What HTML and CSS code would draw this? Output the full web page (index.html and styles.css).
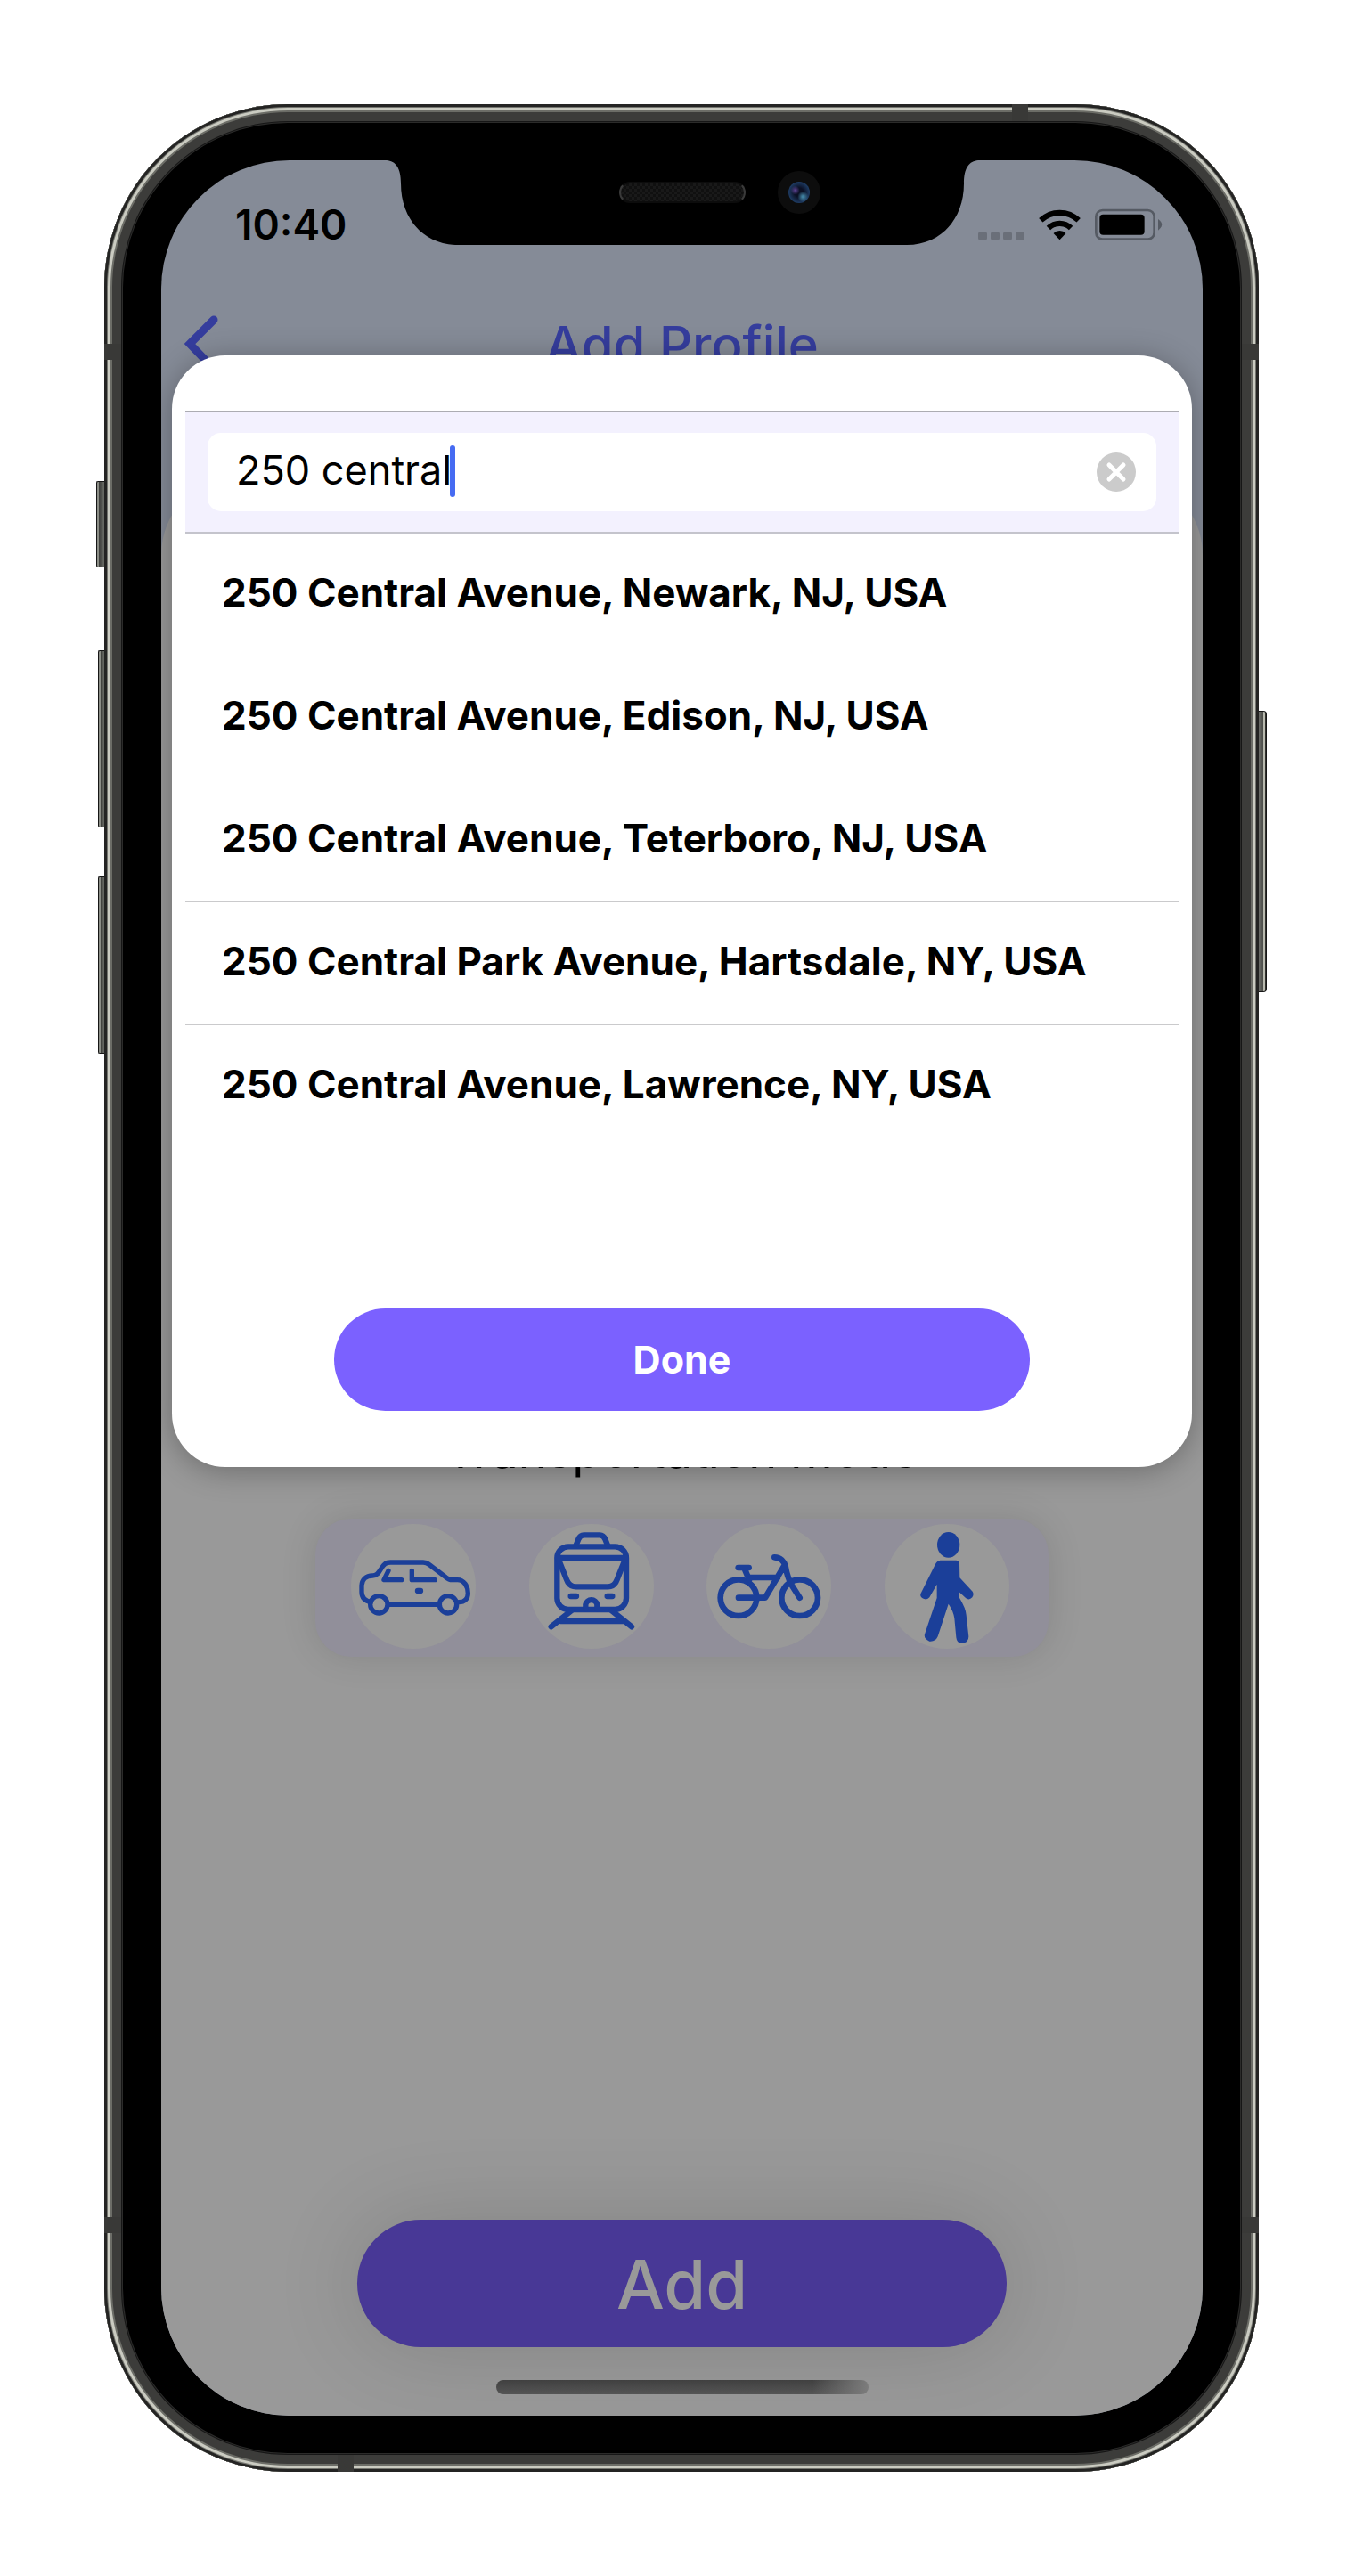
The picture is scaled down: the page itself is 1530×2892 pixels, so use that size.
FILE: index.html
```html
<!DOCTYPE html>
<html lang="en">
<head>
<meta charset="utf-8">
<meta name="viewport" content="width=device-width, initial-scale=1">
<title>Add Profile</title>
<link rel="stylesheet" href="styles.css">
</head>
<body>
<div class="device">
  <span class="key key-mute"></span>
  <span class="key key-up"></span>
  <span class="key key-down"></span>
  <span class="key key-power"></span>
  <span class="band band-v band-top"></span>
  <span class="band band-v band-bottom"></span>
  <span class="band band-h band-left band-high"></span>
  <span class="band band-h band-right band-high"></span>
  <span class="band band-h band-left band-low"></span>
  <span class="band band-h band-right band-low"></span>

  <div class="screen">
    <div class="notch">
      <svg class="notch-shape" viewBox="0 0 664 95" aria-hidden="true">
        <path d="M0 0C10 1 16 8 16 26C16 66 42 95 80 95H584C622 95 648 66 648 26C648 8 654 1 664 0Z"/>
      </svg>
      <span class="speaker"></span>
      <span class="camera"><span class="lens"></span></span>
    </div>

    <header class="status">
      <time class="clock">10:40</time>
      <div class="indicators">
        <span class="cell"><i></i><i></i><i></i><i></i></span>
        <svg class="wifi" viewBox="556 433 148 108" aria-hidden="true">
          <path class="arc" d="M566 473A92 92 0 0 1 694 473M592 499A54 54 0 0 1 668 499"/>
          <path d="M630 539L609 517A30 30 0 0 1 651 517Z"/>
        </svg>
        <svg class="battery" viewBox="750 433 228 108" aria-hidden="true">
          <rect class="shell" x="754" y="439" width="196" height="98" rx="22"/>
          <rect x="766" y="453" width="151" height="69" rx="12"/>
          <path class="nub" d="M963 469Q988 487 963 507Z"/>
        </svg>
      </div>
    </header>

    <nav class="navbar">
      <a class="back" href="#" aria-label="Back">
        <svg viewBox="0 0 39 66" aria-hidden="true"><path d="M33 5L6 32L33 60"/></svg>
      </a>
      <h1 class="title">Add Profile</h1>
    </nav>

    <main class="sheet">
      <h2 class="subtitle">Transportation mode</h2>
      <div class="modes">
        <button class="mode" type="button" aria-label="Car">
          <svg viewBox="165 363 420 420" aria-hidden="true">
            <path class="s16" d="M232 626C212 622 201 610 201 592V572C201 550 215 537 238 537C262 537 262 510 280 497C286 492 292 492 298 492H408C416 492 422 494 428 499L484 542C492 549 498 551 506 551H524C545 551 559 572 559 596C559 614 548 626 528 626M291 634H460M291 520L276 551H335M370 520V551H448"/>
            <circle class="s16" cx="259" cy="634" r="29"/>
            <circle class="s16" cx="492" cy="634" r="29"/>
            <path class="s19" d="M390 588H399"/>
          </svg>
        </button>
        <button class="mode" type="button" aria-label="Train">
          <svg viewBox="764 363 420 420" aria-hidden="true">
            <rect class="s19" x="858" y="439" width="233" height="212" rx="38"/>
            <path class="s19" d="M860 477H1090M864 485L890 550C896 566 906 574 922 574H1030C1046 574 1054 566 1060 550L1086 485M922 434L930 414C934 404 938 400 948 400H1002C1012 400 1016 404 1020 414L1028 434M904 606H923M1027 606H1044M954 648V634A20 20 0 0 1 993 634V648M906 655L838 709M1042 655L1109 709M870 690H1080"/>
          </svg>
        </button>
        <button class="mode" type="button" aria-label="Bicycle">
          <svg viewBox="102 363 420 420" aria-hidden="true">
            <circle class="s20" cx="210" cy="611" r="61"/>
            <circle class="s20" cx="416" cy="611" r="61"/>
            <path class="s20" d="M210 611H300L366 500M250 543H342M246 551L232 518M209 510H245M331 475C352 475 364 490 368 505C372 530 378 550 390 570L416 611"/>
          </svg>
        </button>
        <button class="mode" type="button" aria-label="Walk">
          <svg viewBox="701 363 420 420" aria-hidden="true">
            <ellipse class="solid" cx="916" cy="433" rx="38" ry="43"/>
            <path class="solid" d="M888 485H942Q953 486 953 498L954 544L997 590Q1003 600 996 610Q986 621 975 613L952 592V610Q975 648 976 670L984 742Q984 764 960 765Q944 764 942 745L936 680Q932 655 916 632L880 742Q872 760 852 758Q832 750 836 734L877 612V566L852 610Q844 620 832 614Q818 608 823 596L872 498Q878 486 888 485Z"/>
          </svg>
        </button>
      </div>
      <button class="add" type="button">Add</button>
      <span class="home"></span>
    </main>

    <section class="modal" role="dialog" aria-label="Address search">
      <div class="search">
        <div class="field">
          <label class="entry">
            <input class="query" type="text" value="250 central" aria-label="Address">
            <span class="caret"></span>
          </label>
          <button class="clear" type="button" aria-label="Clear">
            <svg viewBox="0 0 44 44" aria-hidden="true"><circle cx="22" cy="22" r="22"/><path d="M14 14L30 30M30 14L14 30"/></svg>
          </button>
        </div>
      </div>
      <ul class="results">
        <li>250 Central Avenue, Newark, NJ, USA</li>
        <li>250 Central Avenue, Edison, NJ, USA</li>
        <li>250 Central Avenue, Teterboro, NJ, USA</li>
        <li>250 Central Park Avenue, Hartsdale, NY, USA</li>
        <li>250 Central Avenue, Lawrence, NY, USA</li>
      </ul>
      <button class="done" type="button">Done</button>
    </section>
  </div>
</div>
</body>
</html>
```
FILE: styles.css
```css
* { box-sizing: border-box; }

body {
  margin: 0;
  padding: 117px;
  background: #fff;
  color: #000;
  font-family: Inter, "Liberation Sans", sans-serif;
}

button {
  border: 0;
  padding: 0;
  font-family: inherit;
  cursor: pointer;
}

/* Phone body */
.device {
  position: relative;
  display: flex;
  min-height: calc(100vh - 234px);
  padding: 63px 63px 63px 64px;
  border-radius: 206px;
  background: #000;
  box-shadow:
    inset 0 0 0 3px #242423,
    inset 0 0 0 4px #74756f,
    inset 0 0 0 7px #cacbc1,
    inset 0 0 0 9px #6c6d67,
    inset 0 0 0 19px #3c3c3a,
    inset 0 0 0 20px #161616,
    inset 0 0 0 21px #2b2b2a;
}

.key {
  position: absolute;
  left: -7px;
  width: 7px;
  border: 1px solid #161616;
  border-right: 0;
  border-radius: 2px 0 0 2px;
  background: linear-gradient(90deg, #8b8d86 2px, #3c3d3a 2px, #6a6c66);
}
.key-mute { top: 423px; left: -9px; width: 9px; height: 97px; }
.key-up { top: 613px; height: 199px; }
.key-down { top: 867px; height: 199px; }
.key-power {
  top: 681px;
  left: auto;
  right: -9px;
  width: 9px;
  height: 316px;
  border: 1px solid #161616;
  border-left: 0;
  border-radius: 0 4px 4px 0;
  background: linear-gradient(270deg, #33332f 1px, #b9baaf 1px, #b9baaf 3px, #4c4d49 3px, #6a6b67);
}

.band { position: absolute; background: #393937; }
.band-v { width: 18px; height: 19px; }
.band-h { width: 19px; height: 18px; }
.band-top { top: 0; right: 259px; }
.band-bottom { bottom: 0; left: 262px; }
.band-left { left: 0; }
.band-right { right: 0; }
.band-high { top: 269px; }
.band-low { bottom: 268px; }

/* Screen */
.screen {
  position: relative;
  display: flex;
  flex-direction: column;
  flex: 1;
  min-width: 0;
  overflow: hidden;
  border-radius: 144px;
  background: #858b97;
}

.notch {
  position: absolute;
  z-index: 2;
  top: 0;
  left: 50%;
  width: 664px;
  height: 95px;
  transform: translateX(-50%);
}
.notch-shape { display: block; width: 100%; height: 100%; }
.speaker {
  position: absolute;
  top: 24px;
  left: 261px;
  width: 142px;
  height: 24px;
  border: 2px solid #0c0c0c;
  border-color: #0c0c0c #3a3a3a;
  border-radius: 12px;
  background: repeating-conic-gradient(#191919 0 25%, #101010 0 50%) 0 0 / 6px 6px;
}
.camera {
  position: absolute;
  top: 12px;
  left: 439px;
  display: grid;
  place-items: center;
  width: 48px;
  height: 48px;
  border-radius: 50%;
  background: #0d0d0d;
}
.lens {
  width: 24px;
  height: 24px;
  border-radius: 50%;
  background:
    radial-gradient(circle at 32% 40%, #5c4290, transparent 5px),
    radial-gradient(circle at 68% 70%, #40809f 1px, transparent 6px),
    radial-gradient(circle, #0b1024 30%, #2d5c92);
}

.status {
  display: flex;
  justify-content: space-between;
  align-items: center;
  padding: 44px 45px 0 83px;
}
.clock {
  font-size: 46px;
  line-height: 56px;
  font-weight: 600;
}
.indicators { display: flex; align-items: center; gap: 15px; }
.cell { display: flex; gap: 4px; align-self: flex-end; }
.cell i {
  width: 10px;
  height: 10px;
  border-radius: 3px;
  background: #6a6f79;
}
.wifi { width: 49px; height: 36px; }
.wifi .arc { fill: none; stroke: #000; stroke-width: 19; }
.battery { width: 76px; height: 36px; }
.battery .shell { fill: none; stroke: #555a63; stroke-width: 8; }
.battery .nub { fill: #555a63; }

.navbar {
  position: relative;
  display: flex;
  justify-content: center;
  align-items: center;
  height: 114px;
  margin-top: 50px;
}
.back { position: absolute; top: 24px; left: 26px; }
.back svg { display: block; width: 39px; height: 66px; }
.back path { fill: none; stroke: #353d9d; stroke-width: 9; stroke-linecap: round; }
.title {
  margin: 0;
  font-size: 58px;
  line-height: 70px;
  font-weight: 500;
  color: #353d9d;
}

.sheet {
  display: flex;
  flex-direction: column;
  flex: 1;
  align-items: center;
  margin-top: 89px;
  padding: 1066px 24px 24px;
  border-radius: 90px 90px 0 0;
  background: #999;
}
.subtitle {
  margin: 0 0 46px;
  font-size: 54px;
  line-height: 60px;
  font-weight: 400;
}
.modes {
  display: flex;
  justify-content: space-between;
  width: 823px;
  max-width: 100%;
  padding: 6px 44px 9px 40px;
  border-radius: 40px;
  background: #918f9a;
  box-shadow: 0 0 40px rgba(0, 0, 0, .12);
}
.mode {
  width: 140px;
  height: 140px;
  border-radius: 50%;
  background: #999;
}
.mode svg { display: block; width: 100%; height: 100%; }
.mode path, .mode circle, .mode rect {
  fill: none;
  stroke: #1b3f99;
  stroke-linecap: round;
  stroke-linejoin: round;
}
.mode .s16 { stroke-width: 16; }
.mode .s19 { stroke-width: 19; }
.mode .s20 { stroke-width: 20; }
.mode .solid { fill: #1b3f99; stroke: none; }

.add {
  width: 729px;
  max-width: 100%;
  height: 143px;
  margin-top: auto;
  border-radius: 72px;
  background: #483896;
  box-shadow: 0 0 100px rgba(0, 0, 0, .14);
  color: #999;
  font-size: 76px;
  line-height: 92px;
  font-weight: 500;
}
.home {
  width: 418px;
  height: 16px;
  margin-top: 37px;
  border-radius: 8px;
  background: linear-gradient(90deg, transparent 85%, #7c7c7c), linear-gradient(#404040, #555);
}

/* Address search dialog */
.modal {
  position: absolute;
  top: 219px;
  left: 12px;
  right: 12px;
  display: flex;
  flex-direction: column;
  padding: 62px 15px 63px;
  border-radius: 60px;
  background: #fff;
  box-shadow: 0 4px 34px rgba(0, 0, 0, .3);
}
.search {
  padding: 23px 25px;
  border-top: 2px solid #acacb2;
  border-bottom: 2px solid #c4c4cc;
  background: #f3f1fe;
}
.field {
  display: flex;
  align-items: center;
  justify-content: space-between;
  height: 88px;
  padding: 0 23px 0 32px;
  border-radius: 15px;
  background: #fff;
}
.entry { position: relative; flex: 1; }
.query {
  display: block;
  width: 100%;
  padding: 0 0 4px;
  border: 0;
  outline: 0;
  background: none;
  color: #000;
  font-family: inherit;
  font-size: 45px;
  line-height: 56px;
}
.caret {
  position: absolute;
  top: 0;
  left: 240px;
  width: 6px;
  height: 58px;
  border-radius: 3px;
  background: #466bf2;
}
.clear { width: 44px; height: 44px; border-radius: 50%; background: none; }
.clear svg { display: block; width: 44px; height: 44px; }
.clear circle { fill: #cbcbcb; }
.clear path { stroke: #fff; stroke-width: 5; stroke-linecap: round; }

.results {
  margin: 0 0 181px;
  padding: 0;
  list-style: none;
}
.results li {
  padding: 39px 41px 43px;
  font-size: 44px;
  line-height: 55px;
  font-weight: 700;
}
.results li + li { border-top: 1px solid #cacacc; }

.done {
  align-self: center;
  width: 781px;
  max-width: 100%;
  height: 115px;
  border-radius: 58px;
  background: #7b61ff;
  color: #fff;
  font-size: 43px;
  line-height: 55px;
  font-weight: 700;
}
```
